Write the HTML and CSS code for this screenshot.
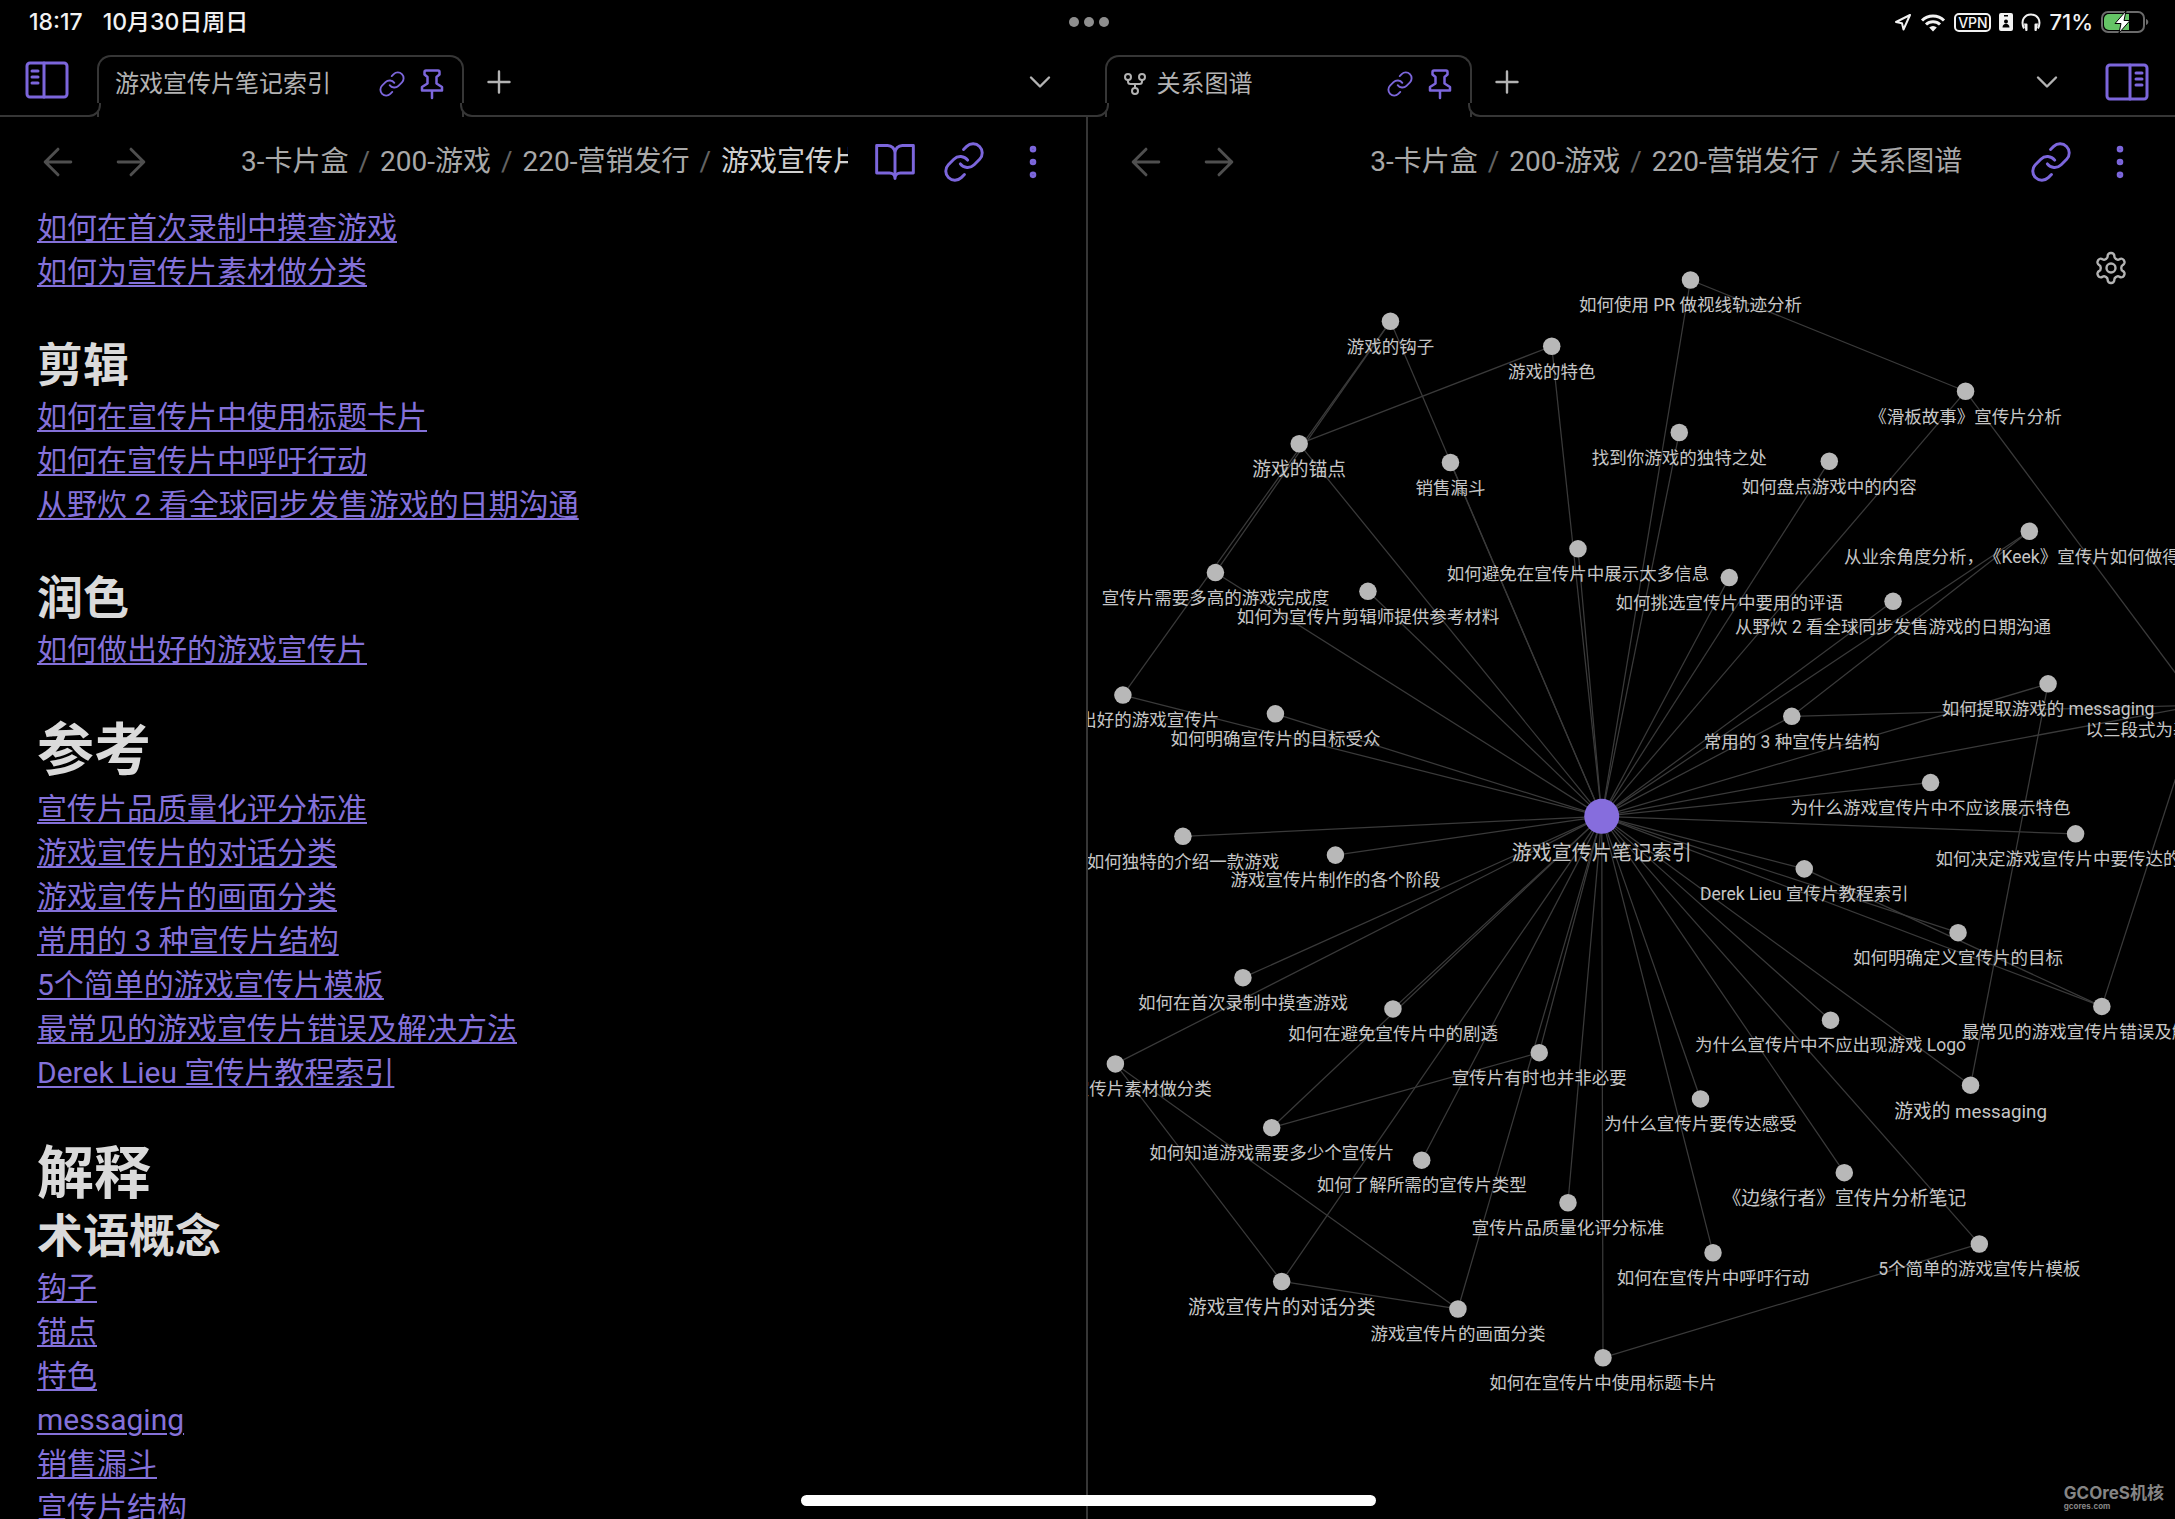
FILE: index.html
```html
<!DOCTYPE html>
<html lang="zh-CN">
<head>
<meta charset="utf-8">
<meta name="viewport" content="width=device-width, initial-scale=1">
<title>游戏宣传片笔记索引</title>
<link rel="stylesheet" href="styles.css">
</head>
<body>
<svg class="sprite" aria-hidden="true">
  <symbol id="i-link" viewBox="0 0 24 24"><path d="M10 13a5 5 0 0 0 7.54.54l3-3a5 5 0 0 0-7.07-7.07l-1.72 1.71"/><path d="M14 11a5 5 0 0 0-7.54-.54l-3 3a5 5 0 0 0 7.07 7.07l1.71-1.71"/></symbol>
  <symbol id="i-pin" viewBox="0 0 32 32"><path d="M10 2.500h12a1.500 1.500 0 0 1 1.500 1.500v2.500l-3 2.500v6.500l5.500 3.500v3.500h-20v-3.500l5.500-3.500v-6.500l-3-2.500v-2.500a1.500 1.500 0 0 1 1.500-1.500zM16 22.500v7.500"/></symbol>
  <symbol id="i-plus" viewBox="0 0 24 24"><path d="M5 12h14M12 5v14"/></symbol>
  <symbol id="i-chevron" viewBox="0 0 24 24"><path d="m6 9 6 6 6-6"/></symbol>
  <symbol id="i-left" viewBox="0 0 24 24"><path d="M19 12H5M12 19l-7-7 7-7"/></symbol>
  <symbol id="i-right" viewBox="0 0 24 24"><path d="M5 12h14M12 5l7 7-7 7"/></symbol>
  <symbol id="i-book" viewBox="0 0 24 24"><path d="M2 3h6a4 4 0 0 1 4 4v14a3 3 0 0 0-3-3H2zM22 3h-6a4 4 0 0 0-4 4v14a3 3 0 0 1 3-3h7z"/></symbol>
  <symbol id="i-more" viewBox="0 0 24 24"><circle cx="12" cy="5" r="1"/><circle cx="12" cy="12" r="1"/><circle cx="12" cy="19" r="1"/></symbol>
  <symbol id="i-fork" viewBox="0 0 24 24"><circle cx="12" cy="19" r="3"/><circle cx="5" cy="5" r="3"/><circle cx="19" cy="5" r="3"/><path d="M19 8v1.500c0 1.500-1 2.500-2.500 2.500h-9c-1.500 0-2.500-1-2.500-2.500V8M12 12v4"/></symbol>
  <symbol id="i-gear" viewBox="0 0 24 24"><path d="M12.220 2h-.44a2 2 0 0 0-2 2v.18a2 2 0 0 1-1 1.730l-.43.25a2 2 0 0 1-2 0l-.15-.08a2 2 0 0 0-2.730.73l-.22.38a2 2 0 0 0 .73 2.730l.15.1a2 2 0 0 1 1 1.720v.51a2 2 0 0 1-1 1.740l-.15.09a2 2 0 0 0-.73 2.730l.22.38a2 2 0 0 0 2.730.73l.15-.08a2 2 0 0 1 2 0l.43.25a2 2 0 0 1 1 1.730V20a2 2 0 0 0 2 2h.44a2 2 0 0 0 2-2v-.18a2 2 0 0 1 1-1.730l.43-.25a2 2 0 0 1 2 0l.15.08a2 2 0 0 0 2.730-.73l.22-.39a2 2 0 0 0-.73-2.730l-.15-.08a2 2 0 0 1-1-1.740v-.5a2 2 0 0 1 1-1.740l.15-.09a2 2 0 0 0 .73-2.730l-.22-.38a2 2 0 0 0-2.730-.73l-.15.08a2 2 0 0 1-2 0l-.43-.25a2 2 0 0 1-1-1.730V4a2 2 0 0 0-2-2z"/><circle cx="12" cy="12" r="3"/></symbol>
  <symbol id="i-sidebar" viewBox="0 0 44 38"><rect x="2" y="2" width="40" height="34" rx="3"/><path d="M19 2v34M7 10h6M7 16h6M7 22h6"/></symbol>
</svg>

<div class="app">
  <header class="status">
    <div class="status-left"><time>18:17</time><span>10月30日周日</span></div>
    <div class="multitask"><i></i><i></i><i></i></div>
    <div class="status-right">
      <svg class="s-loc" viewBox="0 0 18 18"><path d="M16 2 2 9l6 1.200L9.500 16.500z"/></svg>
      <svg class="s-wifi" viewBox="0 0 26 19"><path d="M2 7.500a15.500 15.500 0 0 1 22 0M6 11.500a10 10 0 0 1 14 0"/><path class="solid" d="M13 18.500 9.200 14.600a5.400 5.400 0 0 1 7.600 0z"/></svg>
      <span class="vpn">VPN</span>
      <svg class="s-card" viewBox="0 0 14 18"><rect width="14" height="18" rx="2"/><path class="cut" d="M5 2h4v1.500H5zM3.500 14.500c0-5 7-5 7 0z"/><circle class="cut" cx="7" cy="8.500" r="2"/></svg>
      <svg class="s-head" viewBox="0 0 20 19"><path d="M3 15.500C-1 7 4 1.500 10 1.500S21 7 17 15.500"/><path class="solid" d="M3 10.500h2.500a1 1 0 0 1 1 1V17a1 1 0 0 1-1 1H4.500zM17 10.500h-2.500a1 1 0 0 0-1 1V17a1 1 0 0 0 1 1h1z"/></svg>
      <span>71%</span>
      <svg class="s-batt" viewBox="0 0 48 24"><rect class="shell" x="1" y="2" width="42" height="20" rx="6"/><path class="nub" d="M45 9c3 1 3 5 0 6z"/><path class="charge" d="M8 4h20v16H8a5 5 0 0 1-5-5V9a5 5 0 0 1 5-5z"/><path class="bolt" d="M25 1 14 13.500h6L18 23l11-12.500h-6z"/></svg>
    </div>
  </header>

  <main class="panes">
    <section class="pane">
      <div class="tabbar">
        <div class="lead lead-wide"><button class="accent" aria-label="展开左侧边栏"><svg class="ic sidebar"><use href="#i-sidebar"/></svg></button></div>
        <div class="tab">
          <span class="tab-title">游戏宣传片笔记索引</span>
          <button class="accent" aria-label="关联的标签页"><svg class="ic ic-s"><use href="#i-link"/></svg></button>
          <button class="accent" aria-label="解除锁定"><svg class="ic ic-pin"><use href="#i-pin"/></svg></button>
        </div>
        <div class="rest">
          <button aria-label="新标签页"><svg class="ic ic-m"><use href="#i-plus"/></svg></button>
          <button class="push" aria-label="标签页列表"><svg class="ic ic-m"><use href="#i-chevron"/></svg></button>
        </div>
      </div>
      <div class="view view-note">
        <div class="view-head">
          <div class="nav"><button aria-label="后退"><svg class="ic ic-l"><use href="#i-left"/></svg></button><button aria-label="前进"><svg class="ic ic-l"><use href="#i-right"/></svg></button></div>
          <nav class="crumbs"><a href="#">3-卡片盒</a><i>/</i><a href="#">200-游戏</a><i>/</i><a href="#">220-营销发行</a><i>/</i><span class="current">游戏宣传片笔记索引</span></nav>
          <div class="actions">
            <button class="accent" aria-label="阅读视图"><svg class="ic ic-l"><use href="#i-book"/></svg></button>
            <button class="accent" aria-label="关联"><svg class="ic ic-l"><use href="#i-link"/></svg></button>
            <button class="accent" aria-label="更多选项"><svg class="ic ic-l"><use href="#i-more"/></svg></button>
          </div>
        </div>
        <article class="note">
          <p><a href="#">如何在首次录制中摸查游戏</a></p>
          <p><a href="#">如何为宣传片素材做分类</a></p>
          <h2>剪辑</h2>
          <p><a href="#">如何在宣传片中使用标题卡片</a></p>
          <p><a href="#">如何在宣传片中呼吁行动</a></p>
          <p><a href="#">从野炊 2 看全球同步发售游戏的日期沟通</a></p>
          <h2>润色</h2>
          <p><a href="#">如何做出好的游戏宣传片</a></p>
          <h1>参考</h1>
          <p><a href="#">宣传片品质量化评分标准</a></p>
          <p><a href="#">游戏宣传片的对话分类</a></p>
          <p><a href="#">游戏宣传片的画面分类</a></p>
          <p><a href="#">常用的 3 种宣传片结构</a></p>
          <p><a href="#">5个简单的游戏宣传片模板</a></p>
          <p><a href="#">最常见的游戏宣传片错误及解决方法</a></p>
          <p><a href="#">Derek Lieu 宣传片教程索引</a></p>
          <h1>解释</h1>
          <h2>术语概念</h2>
          <p><a href="#">钩子</a></p>
          <p><a href="#">锚点</a></p>
          <p><a href="#">特色</a></p>
          <p><a href="#">messaging</a></p>
          <p><a href="#">销售漏斗</a></p>
          <p><a href="#">宣传片结构</a></p>
        </article>
      </div>
    </section>

    <section class="pane">
      <div class="tabbar">
        <div class="lead"></div>
        <div class="tab">
          <svg class="ic ic-fork"><use href="#i-fork"/></svg>
          <span class="tab-title">关系图谱</span>
          <button class="accent" aria-label="关联的标签页"><svg class="ic ic-s"><use href="#i-link"/></svg></button>
          <button class="accent" aria-label="解除锁定"><svg class="ic ic-pin"><use href="#i-pin"/></svg></button>
        </div>
        <div class="rest rest-end">
          <button aria-label="新标签页"><svg class="ic ic-m"><use href="#i-plus"/></svg></button>
          <button class="push" aria-label="标签页列表"><svg class="ic ic-m"><use href="#i-chevron"/></svg></button>
          <button class="accent" aria-label="展开右侧边栏"><svg class="ic sidebar flip"><use href="#i-sidebar"/></svg></button>
        </div>
      </div>
      <div class="view">
        <div class="view-head">
          <div class="nav"><button aria-label="后退"><svg class="ic ic-l"><use href="#i-left"/></svg></button><button aria-label="前进"><svg class="ic ic-l"><use href="#i-right"/></svg></button></div>
          <nav class="crumbs crumbs-center"><a href="#">3-卡片盒</a><i>/</i><a href="#">200-游戏</a><i>/</i><a href="#">220-营销发行</a><i>/</i><span>关系图谱</span></nav>
          <div class="actions">
            <button class="accent" aria-label="关联"><svg class="ic ic-l"><use href="#i-link"/></svg></button>
            <button class="accent" aria-label="更多选项"><svg class="ic ic-l"><use href="#i-more"/></svg></button>
          </div>
        </div>
        <div class="graph">
          <svg id="graph" viewBox="1 -1 870 1051" preserveAspectRatio="xMidYMin slice"></svg>
          <button class="graph-settings" aria-label="图谱设置"><svg class="ic ic-m"><use href="#i-gear"/></svg></button>
        </div>
      </div>
    </section>
  </main>

  <div class="home-bar"></div>
  <div class="watermark"><b>GCOreS机核</b><small>gcores.com</small></div>
</div>
<script src="graph.js"></script>
</body>
</html>
```

FILE: styles.css
```css
* { box-sizing: border-box; }

body {
  margin: 0;
  background: #000;
  color: #b3b3b3;
  font-family: Roboto, "Noto Sans CJK SC", sans-serif;
  --accent: #7c66dc;
  --link: #8471d9;
  --line: #363636;
}

button {
  display: flex;
  padding: 0;
  border: 0;
  background: none;
  color: inherit;
  font: inherit;
}

a { color: inherit; text-decoration: none; }
i { font-style: normal; }

.sprite { position: absolute; width: 0; height: 0; }

.app {
  position: relative;
  display: flex;
  flex-direction: column;
  height: 100vh;
  overflow: hidden;
}

/* icons */
.ic {
  display: block;
  flex: none;
  fill: none;
  stroke: currentColor;
  stroke-width: 1.6;
  stroke-linecap: round;
  stroke-linejoin: round;
}
.ic-s { width: 28px; height: 28px; }
.ic-m { width: 36px; height: 36px; }
.ic-l { width: 44px; height: 44px; }
.ic-pin { width: 32px; height: 32px; stroke-width: 2.5; }
.ic-fork { width: 24px; height: 24px; stroke-width: 2; }
.sidebar { width: 44px; height: 38px; stroke-width: 3; }
.flip { transform: scaleX(-1); }
.accent { color: var(--accent); }

/* status bar */
.status {
  display: grid;
  grid-template-columns: 1fr auto 1fr;
  align-items: center;
  flex: none;
  height: 55px;
  padding: 0 26px 11px 29px;
  color: #f2f2f2;
  font-family: Inter, "Noto Sans CJK SC", sans-serif;
  font-size: 23px;
  font-weight: 500;
  line-height: 28px;
}
.status-left { display: flex; align-items: baseline; gap: 20px; }
.multitask { display: flex; gap: 5px; }
.multitask i { width: 10px; height: 10px; border-radius: 5px; background: #8e8e8e; }
.status-right { display: flex; align-items: center; justify-content: flex-end; gap: 8px; font-size: 22px; }
.status-right svg { display: block; fill: none; stroke: currentColor; stroke-width: 2; stroke-linejoin: round; }
.status-right .solid { fill: currentColor; stroke: none; }
.s-loc { width: 18px; height: 18px; }
.s-wifi { width: 26px; height: 19px; }
.status-right .s-wifi { stroke-width: 3; }
.vpn {
  width: 37px;
  height: 19px;
  border: 2px solid;
  border-radius: 5px;
  font-size: 14px;
  line-height: 15px;
  text-align: center;
}
.s-card { width: 14px; height: 18px; }
.status-right .s-card { fill: currentColor; stroke: none; }
.s-card .cut { fill: #000; }
.s-head { width: 20px; height: 19px; }
.s-batt { width: 48px; height: 24px; }
.s-batt .shell { stroke: #6b6b6b; }
.s-batt .nub { fill: #6b6b6b; stroke: none; }
.s-batt .charge { fill: #65c466; stroke: none; }
.s-batt .bolt { fill: #fff; stroke: #000; stroke-width: 1; }

/* panes */
.panes { display: grid; grid-template-columns: 1fr 1fr; flex: 1; min-height: 0; }
.pane { display: flex; flex-direction: column; min-width: 0; min-height: 0; }

.tabbar { display: flex; flex: none; height: 62px; }
.lead, .rest { display: flex; align-items: center; border-bottom: 2px solid var(--line); }
.lead { width: 7px; padding-bottom: 10px; }
.lead-wide { width: 87px; padding-left: 25px; }
.rest { flex: 1; padding-bottom: 6px; padding-left: 7px; padding-right: 30px; }
.rest-end { padding-right: 26px; gap: 40px; }
.push { margin-left: auto; }

.tab {
  position: relative;
  display: flex;
  align-items: center;
  gap: 10px;
  width: 367px;
  margin: 0 10px;
  padding: 0 14px 6px 16px;
  border: 2px solid var(--line);
  border-bottom: 0;
  border-radius: 14px 14px 0 0;
  font-size: 24px;
}
.tab-title { flex: 1; line-height: 32px; }
.tab::before, .tab::after {
  content: "";
  position: absolute;
  bottom: 0;
  width: 12px;
  height: 12px;
  border-bottom: 2px solid var(--line);
  background: #000;
}
.tab::before { left: -12px; border-right: 2px solid var(--line); border-bottom-right-radius: 12px; }
.tab::after { right: -12px; border-left: 2px solid var(--line); border-bottom-left-radius: 12px; }

.view { display: flex; flex-direction: column; flex: 1; min-height: 0; }
.view-note { box-shadow: inset -2px 0 var(--line); }
.view-head { display: flex; align-items: center; flex: none; height: 88px; padding: 2px 33px 0 36px; }
.nav { display: flex; gap: 29px; margin-right: 88px; color: #4f4f4f; }
.crumbs {
  display: flex;
  flex: 1;
  min-width: 0;
  margin-right: 25px;
  overflow: hidden;
  white-space: nowrap;
  font-size: 28px;
  line-height: 40px;
  color: #a8a8a8;
}
.crumbs-center { justify-content: center; }
.crumbs i { margin: 0 10px; color: #636363; }
.crumbs .current { color: #d0d0d0; }
.actions { display: flex; gap: 25px; }

/* note */
.note { flex: 1; min-height: 0; overflow: hidden; padding: 1px 37px 0; }
.note p { margin: 0; font-size: 30px; line-height: 44px; }
.note a {
  color: var(--link);
  text-decoration: underline;
  text-decoration-thickness: 2px;
  text-underline-offset: 3px;
}
.note h1, .note h2 { color: #dadada; font-weight: 700; }
.note h1 { margin: 43px 0 0; font-size: 57px; line-height: 72px; }
.note h2 { margin: 41px 0 0; font-size: 46px; line-height: 60px; }
.note h1 + h2 { margin-top: -4px; }

/* graph */
.graph { position: relative; flex: 1; min-height: 0; }
.graph > svg { display: block; width: 100%; height: 100%; text-spacing-trim: space-all; }
.graph-settings { position: absolute; top: 45px; right: 46px; }
.edge { stroke: #3a3a3a; stroke-width: 1; }
.node { fill: #b8b8b8; }
.node-hub { fill: #866ddd; }
.label { fill: #c6c6c6; font-size: 14px; text-anchor: middle; }
.label-near { font-size: 15px; }
.label-hub { font-size: 16px; }

/* overlays */
.home-bar {
  position: absolute;
  bottom: 13px;
  left: 50%;
  width: 575px;
  height: 11px;
  margin-left: -287px;
  border-radius: 6px;
  background: #fff;
}
.watermark {
  position: absolute;
  right: 11px;
  bottom: 9px;
  display: flex;
  flex-direction: column;
  color: #858585;
  font-family: Inter, "Noto Sans CJK SC", sans-serif;
}
.watermark b { font-size: 17px; line-height: 18px; }
.watermark small { font-size: 8px; line-height: 8px; font-weight: 700; }
```

FILE: graph.js
```js
// id: [x, y, label, size]
const nodes = {
  hub: [412, 488, '游戏宣传片笔记索引', 'hub'],
  hook: [243, 92, '游戏的钩子'],
  feature: [372, 112, '游戏的特色'],
  anchor: [170, 190, '游戏的锚点', 'near'],
  funnel: [291, 205, '销售漏斗'],
  tooMuch: [393, 274, '如何避免在宣传片中展示太多信息'],
  complete: [103, 293, '宣传片需要多高的游戏完成度'],
  editorRef: [225, 308, '如何为宣传片剪辑师提供参考材料'],
  good: [29, 391, '如何做出好的游戏宣传片'],
  audience: [151, 406, '如何明确宣传片的目标受众'],
  pr: [483, 59, '如何使用 PR 做视线轨迹分析'],
  unique: [474, 181, '找到你游戏的独特之处'],
  inventory: [594, 204, '如何盘点游戏中的内容'],
  skate: [703, 148, '《滑板故事》宣传片分析'],
  keek: [754, 260, '从业余角度分析，《Keek》宣传片如何做得更好'],
  quotes: [514, 297, '如何挑选宣传片中要用的评语'],
  botw: [645, 316, '从野炊 2 看全球同步发售游戏的日期沟通'],
  extract: [769, 382, '如何提取游戏的 messaging'],
  three: [564, 408, '常用的 3 种宣传片结构'],
  acts: [890, 399, '以三段式为基础的宣传片结构'],
  introduce: [77, 504, '如何独特的介绍一款游戏'],
  stages: [199, 519, '游戏宣传片制作的各个阶段'],
  firstRec: [125, 617, '如何在首次录制中摸查游戏'],
  spoiler: [245, 642, '如何在避免宣传片中的剧透'],
  needless: [362, 677, '宣传片有时也并非必要'],
  footage: [23, 686, '如何为宣传片素材做分类'],
  noFeature: [675, 461, '为什么游戏宣传片中不应该展示特色'],
  decide: [791, 502, '如何决定游戏宣传片中要传达的信息'],
  derek: [574, 530, 'Derek Lieu 宣传片教程索引'],
  goal: [697, 581, '如何明确定义宣传片的目标'],
  mistakes: [812, 640, '最常见的游戏宣传片错误及解决方法'],
  noLogo: [595, 651, '为什么宣传片中不应出现游戏 Logo'],
  messaging: [707, 703, '游戏的 messaging', 'near'],
  feeling: [491, 714, '为什么宣传片要传达感受'],
  howMany: [148, 737, '如何知道游戏需要多少个宣传片'],
  types: [268, 763, '如何了解所需的宣传片类型'],
  quality: [385, 797, '宣传片品质量化评分标准'],
  dialog: [156, 860, '游戏宣传片的对话分类', 'near'],
  picture: [297, 882, '游戏宣传片的画面分类'],
  titles: [413, 921, '如何在宣传片中使用标题卡片'],
  edgerun: [606, 773, '《边缘行者》宣传片分析笔记', 'near'],
  cta: [501, 837, '如何在宣传片中呼吁行动'],
  five: [714, 830, '5个简单的游戏宣传片模板'],
};

// baseline of the label below the centre of its node
const drop = { hub: 35, near: 26 };

// links between notes, besides the index that links to every one
const edges = [
  ['hook', 'complete'], ['hook', 'good'], ['feature', 'anchor'],
  ['pr', 'skate'], ['skate', 'acts'], ['keek', 'three'], ['three', 'acts'],
  ['extract', 'messaging'], ['acts', 'mistakes'], ['derek', 'mistakes'],
  ['needless', 'howMany'], ['footage', 'dialog'], ['footage', 'picture'],
  ['dialog', 'picture'], ['titles', 'five'],
];
for (const id of Object.keys(nodes)) if (id !== 'hub') edges.push(['hub', id]);

const svg = document.getElementById('graph');
function add(tag, attrs, text) {
  const el = document.createElementNS('http://www.w3.org/2000/svg', tag);
  for (const key in attrs) el.setAttribute(key, attrs[key]);
  if (text) el.textContent = text;
  svg.appendChild(el);
}

for (const [a, b] of edges) {
  add('line', { class: 'edge', x1: nodes[a][0], y1: nodes[a][1], x2: nodes[b][0], y2: nodes[b][1] });
}
for (const [x, y, , size] of Object.values(nodes)) {
  add('circle', { class: size === 'hub' ? 'node node-hub' : 'node', cx: x, cy: y, r: size === 'hub' ? 14 : 7 });
}
for (const [x, y, label, size] of Object.values(nodes)) {
  add('text', { class: size ? 'label label-' + size : 'label', x: x, y: y + (drop[size] || 25) }, label);
}
```
